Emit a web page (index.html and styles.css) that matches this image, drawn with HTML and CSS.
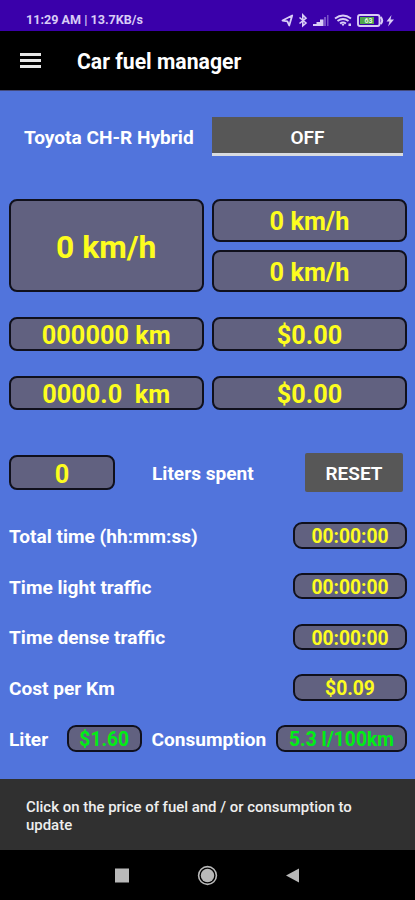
FILE: index.html
```html
<!DOCTYPE html>
<html lang="en">
<head>
<meta charset="utf-8">
<title>Car fuel manager</title>
<link rel="stylesheet" href="styles.css">
</head>
<body>
<div class="screen">
  <header class="status">
    <span class="clock">11:29 AM | 13.7KB/s</span>
    <svg class="status-icons" width="116" height="18" viewBox="0 0 116 18" fill="none" stroke="#d9cdf6">
      <path d="M2.500 9.500 12.200 4.500 9.200 14.500 7.400 10.300Z" stroke-width="1.800" stroke-linejoin="round"/>
      <path d="M19.500 6.500 26 12 22.800 14.800V4L26 7.200 19.500 12.500" stroke-width="1.600"/>
      <g fill="#d9cdf6" stroke="none">
        <path d="M33 15v-2h3.500v2zM36.500 15v-4H40v4zM40 15V8.500h3.500V15z"/>
        <path d="M44 15V6h2V15zM47 15V4h1.500V15z" opacity=".4"/>
      </g>
      <path d="M55 7.500Q63 1.500 71 7.500M57.500 10Q63 6 68.500 10M60 12.500Q63 10.500 66 12.500" stroke-width="1.900"/>
      <path d="M61.500 13h3L63 15.200zM68.500 12.500H71V15h-2.500z" fill="#d9cdf6" stroke="none"/>
      <rect x="78" y="4" width="21.500" height="11" rx="2" stroke-width="1.900"/>
      <path d="M100.500 6q3.500 3.500 0 7" stroke-width="2"/>
      <path d="M80 6h14v7H80z" fill="#4fa64c" stroke="none"/>
      <text x="88.500" y="12.200" class="charge">63</text>
      <path d="M111.500 4 106.500 10.500h3L108 15.500 114 8.500h-3.500z" fill="#d9cdf6" stroke="none"/>
    </svg>
  </header>
  <div class="appbar">
    <div class="menu"><i></i><i></i><i></i></div>
    <h1>Car fuel manager</h1>
  </div>
  <main>
    <section class="vehicle">
      <span class="label name">Toyota CH-R Hybrid</span>
      <button class="toggle">OFF</button>
    </section>
    <section class="speeds">
      <div class="box big">0 km/h</div>
      <div class="box">0 km/h</div>
      <div class="box">0 km/h</div>
    </section>
    <section class="pair">
      <div class="box">000000 km</div>
      <div class="box">$0.00</div>
    </section>
    <section class="pair">
      <div class="box">0000.0&nbsp; km</div>
      <div class="box">$0.00</div>
    </section>
    <section class="spent">
      <div class="box">0</div>
      <span class="label">Liters spent</span>
      <button class="reset">RESET</button>
    </section>
    <section class="rows">
      <div class="row"><span class="label">Total time (hh:mm:ss)</span><div class="pill">00:00:00</div></div>
      <div class="row"><span class="label">Time light traffic</span><div class="pill">00:00:00</div></div>
      <div class="row"><span class="label">Time dense traffic</span><div class="pill">00:00:00</div></div>
      <div class="row"><span class="label">Cost per Km</span><div class="pill">$0.09</div></div>
      <div class="row">
        <span class="label liter">Liter</span><div class="pill green price">$1.60</div>
        <span class="label">Consumption</span><div class="pill green rate">5.3 l/100km</div>
      </div>
    </section>
  </main>
  <div class="snack">Click on the price of fuel and / or consumption to update</div>
  <nav>
    <svg width="415" height="50" viewBox="0 0 415 50" fill="#b9b9b9">
      <rect x="115" y="18.500" width="14" height="14"/>
      <circle cx="207.500" cy="25.500" r="6.700"/>
      <circle cx="207.500" cy="25.500" r="8.900" fill="none" stroke="#b9b9b9" stroke-width="1.600"/>
      <path d="M286 25.500 299 18.500v14z"/>
    </svg>
  </nav>
</div>
</body>
</html>
```
FILE: styles.css
```css
* { box-sizing: border-box; }
body { margin: 0; font-family: Roboto, sans-serif; }
.screen { width: 415px; height: 900px; display: flex; flex-direction: column; background: #000; overflow: hidden; }
.status { height: 31px; background: #3a00aa; display: flex; justify-content: space-between; padding: 11px 19px 0 26px; }
.clock { font-size: 12.6px; line-height: 18px; font-weight: 700; color: #d9cdf6; white-space: nowrap; }
.status-icons { display: block; }
.charge { font-size: 7px; font-weight: 700; fill: #e4f5df; stroke: none; text-anchor: middle; }
.appbar { height: 60px; display: flex; align-items: center; padding-left: 20px; border-bottom: 1px solid #444a7c; }
.menu { width: 21px; display: grid; gap: 3px; }
.menu i { height: 3px; background: #e8e8e8; }
h1 { margin: 3px 0 0 36px; font-size: 21.2px; line-height: 28px; font-weight: 700; color: #fff; white-space: nowrap; }
main { height: 688px; background: #5174dc; padding: 26px 8px 0 9px; }
.label { font-size: 19.1px; line-height: 24px; font-weight: 700; color: #fff; white-space: nowrap; }
.vehicle { height: 39px; display: flex; justify-content: space-between; padding: 0 4px 0 15px; }
.name { line-height: 41px; }
button { border: 0; padding: 0; font-family: inherit; background: #575757; color: #fff; font-size: 19px; font-weight: 600; }
.toggle { width: 191px; border-bottom: 3px solid #d8dbe0; padding-top: 4px; }
.speeds { margin-top: 43px; display: grid; grid-template-columns: 194.5px 195px; grid-template-rows: 42.5px 42.5px; column-gap: 8.5px; row-gap: 8px; }
.box, .pill { display: flex; align-items: center; justify-content: center; background: #616180; border: 2px solid #10101c; color: #fdfd1e; font-weight: 700; white-space: nowrap; }
.box { font-size: 25.3px; line-height: 26px; border-radius: 8px; padding-top: 4px; }
.big { grid-row: span 2; font-size: 31.8px; padding-top: 2px; }
.pair { margin-top: 25px; height: 34px; display: grid; grid-template-columns: 194.5px 195px; column-gap: 8.5px; }
.spent { margin-top: 43px; height: 39px; display: grid; grid-template-columns: 143px 153px 98px; align-items: center; }
.spent .box { width: 106px; height: 35px; }
.spent .label { padding-top: 2px; }
.reset { width: 98px; height: 39px; border-radius: 2px; padding-top: 2px; }
.rows { margin-top: 30px; display: grid; gap: 24.3px; }
.row { height: 26.5px; display: flex; align-items: center; justify-content: space-between; }
.pill { width: 114px; height: 26.5px; border-radius: 9px; font-size: 19.3px; line-height: 20px; padding-top: 3.5px; }
.row .label { padding-top: 3px; }
.green { color: #00ee14; }
.price { width: 75px; }
.rate { width: 131px; }
.liter { width: 48px; }
.snack { height: 71px; background: #303030; padding: 19px 26px 0; color: #eee; font-size: 14.95px; line-height: 18px; font-weight: 500; }
nav { height: 50px; background: #000; }
nav svg { display: block; }
```
